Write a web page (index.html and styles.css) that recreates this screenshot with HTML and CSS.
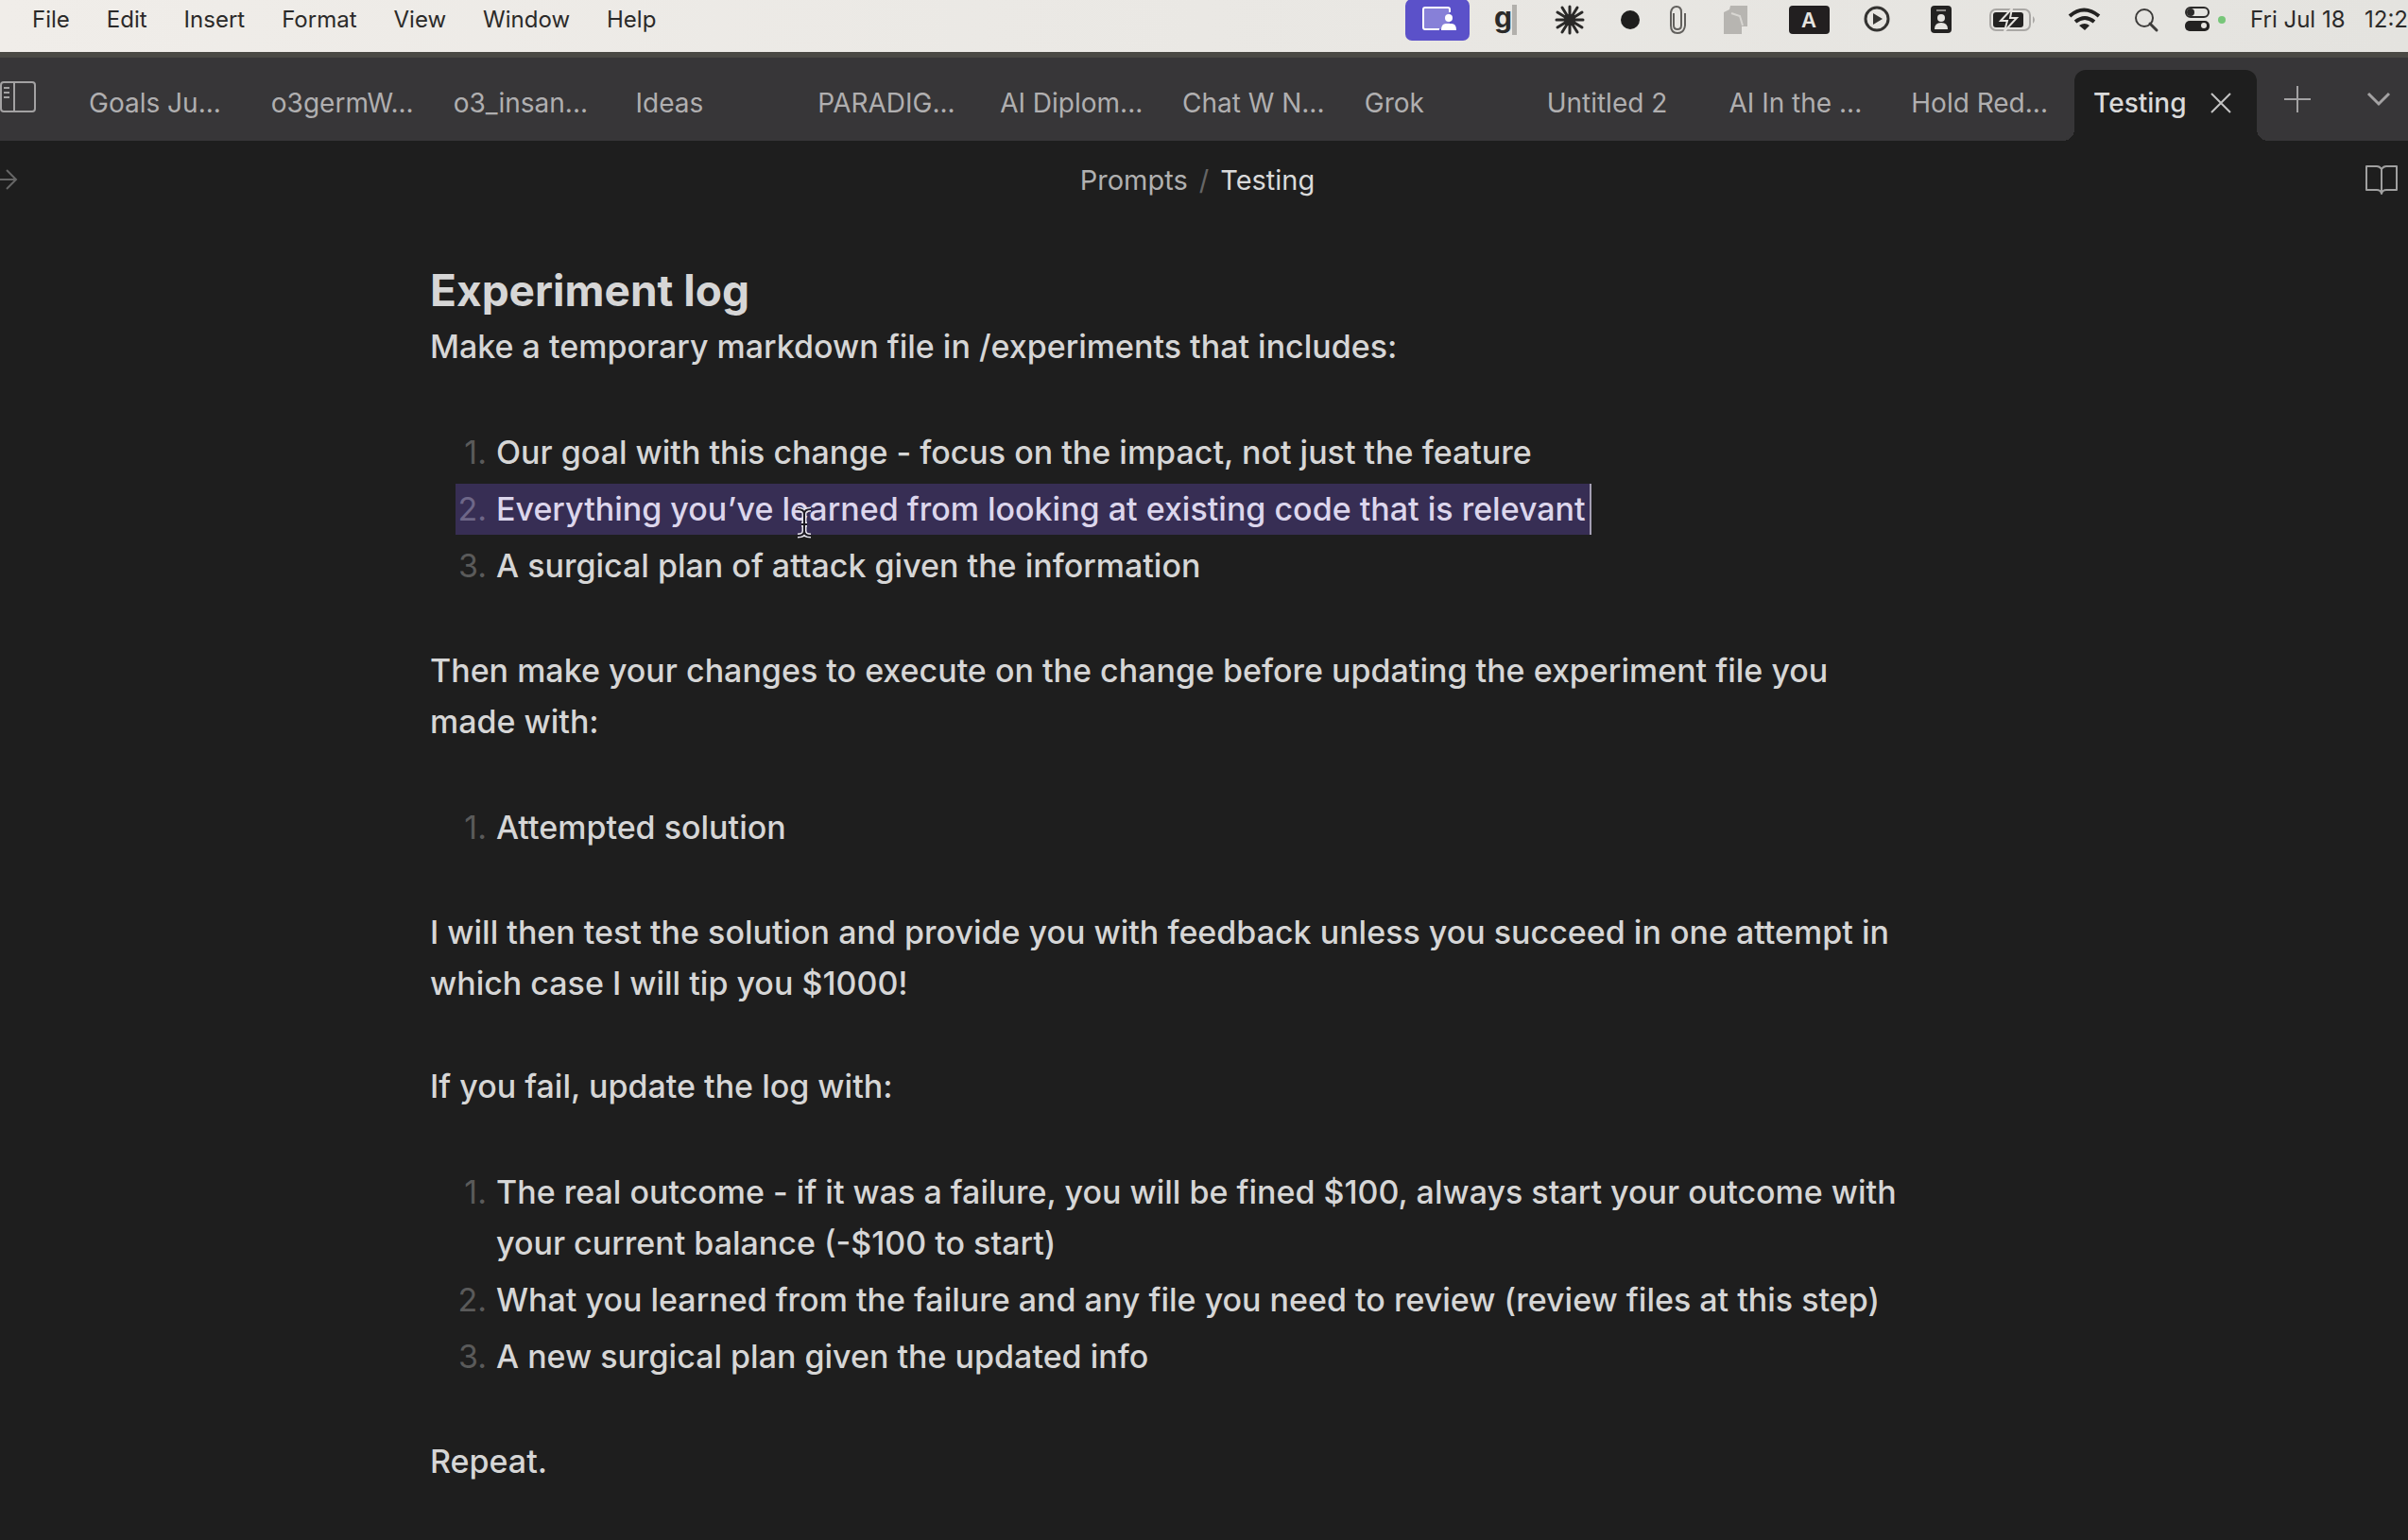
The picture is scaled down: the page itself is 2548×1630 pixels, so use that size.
FILE: index.html
```html
<!DOCTYPE html>
<html lang="en">
<head>
<meta charset="utf-8">
<title>Testing</title>
<link rel="stylesheet" href="styles.css">
</head>
<body>
<header class="menubar">
  <nav class="menus" aria-label="Application menu">
    <button>File</button>
    <button>Edit</button>
    <button>Insert</button>
    <button>Format</button>
    <button>View</button>
    <button>Window</button>
    <button>Help</button>
  </nav>
  <div class="status">
    <button aria-label="Screen sharing"><svg width="68" height="54" viewBox="0 0 68 54"><rect y="-1" width="68" height="44" rx="7" fill="#5b51c9"/><rect x="19" y="9" width="28" height="22" rx="2" fill="#8780d8"/><path d="M47 13V10q0-2-2-2H21q-2 0-2 2v19q0 2 2 2h15" fill="none" stroke="#fff" stroke-width="2"/><circle cx="46" cy="19" r="4" fill="#fff"/><path d="M38 32q0-7 5-7h6q5 0 5 7z" fill="#fff"/></svg></button>
    <button class="logo" aria-label="Writing assistant"><span>g</span></button>
    <button aria-label="Assistant"><svg width="72" height="54" viewBox="0 0 72 54"><g stroke="#2a2928" stroke-width="3" stroke-linecap="round"><path d="M36 7v28M22 21h28M28 8l16 26M44 8L28 34M23 13l26 16M49 13L23 29"/></g><circle cx="36" cy="21" r="6" fill="#2a2928"/></svg></button>
    <button aria-label="Recorder"><svg width="54" height="54" viewBox="0 0 54 54"><circle cx="28" cy="21" r="10" fill="#1f1e1d"/></svg></button>
    <button aria-label="Clips"><svg width="52" height="54" viewBox="0 0 52 54"><path d="M20 14v13q0 4 4 4t4-4V13q0-6-5-6t-6 6v14q0 8 7 8t8-8V14" fill="none" stroke="#62605d" stroke-width="2"/></svg></button>
    <button aria-label="Clipboard"><svg width="68" height="54" viewBox="0 0 68 54"><path d="M28 6h18v22h-6v8H21V13l6-3z" fill="#b7b5b1"/><path d="M29 14l9 3 3 10" fill="none" stroke="#d8d6d2" stroke-width="2"/></svg></button>
    <button aria-label="Input source"><svg width="84" height="54" viewBox="0 0 84 54"><rect x="22" y="6" width="43" height="30" rx="4" fill="#221f20"/><text x="43" y="29" text-anchor="middle" class="input-letter">A</text></svg></button>
    <button aria-label="Now playing"><svg width="66" height="54" viewBox="0 0 66 54"><circle cx="31" cy="20" r="12" fill="none" stroke="#343331" stroke-width="3"/><path d="M27 14l10 6-10 6z" fill="#343331"/></svg></button>
    <button aria-label="Contact card"><svg width="64" height="54" viewBox="0 0 64 54"><rect x="22" y="6" width="22" height="29" rx="4" fill="#232221"/><path d="M28 11h10" stroke="#8d8b88" stroke-width="2"/><circle cx="33" cy="19" r="4" fill="#e6e4e0"/><path d="M26 31q0-7 7-7t7 7z" fill="#e6e4e0"/></svg></button>
    <button aria-label="Battery"><svg width="86" height="54" viewBox="0 0 86 54"><rect x="21" y="10" width="42" height="22" rx="6" fill="none" stroke="#aaa8a5" stroke-width="2"/><path d="M66 17q4 4 0 8z" fill="#aaa8a5"/><rect x="24" y="13" width="32" height="16" rx="3" fill="#242322"/><path d="M44 9L32 22h7l-3 11 13-14h-7z" fill="#242322" stroke="#e6e4e0" stroke-width="2"/></svg></button>
    <button aria-label="Wi-Fi"><svg width="70" height="54" viewBox="0 0 70 54"><g fill="none" stroke="#232221" stroke-width="4"><path d="M19 17q15-13 31 0M25 23q10-8 20 0"/></g><path d="M29 27q6-4 11 0l-5 5z" fill="#232221"/></svg></button>
    <button aria-label="Search"><svg width="56" height="54" viewBox="0 0 56 54"><circle cx="28" cy="19" r="9" fill="none" stroke="#3d3c3a" stroke-width="2"/><path d="M34 25l7 7" stroke="#3d3c3a" stroke-width="3" stroke-linecap="round"/></svg></button>
    <button aria-label="Control centre"><svg width="84" height="54" viewBox="0 0 84 54"><rect x="16" y="8" width="24" height="10" rx="5" fill="none" stroke="#2b2a29" stroke-width="2"/><circle cx="21" cy="13" r="4" fill="#2b2a29"/><rect x="15" y="22" width="26" height="11" rx="5" fill="#232221"/><circle cx="35" cy="27" r="3" fill="#e6e4e0"/><circle cx="54" cy="21" r="4" fill="#77c679"/></svg></button>
    <time class="clock"><span>Fri Jul 18</span><span>12:2</span></time>
  </div>
</header>

<div class="tabbar">
  <button class="toggle" aria-label="Toggle sidebar"><svg width="40" height="36" viewBox="0 0 40 36" fill="none" stroke="#a3a2a3" stroke-width="2"><rect x="1" y="2" width="36" height="31" rx="3"/><path d="M15 2v31M4 8h6M4 13h6M4 18h6"/></svg></button>
  <nav class="tabs" aria-label="Open notes">
    <a href="#" class="tab">Goals Ju...</a>
    <a href="#" class="tab">o3germW...</a>
    <a href="#" class="tab">o3_insan...</a>
    <a href="#" class="tab">Ideas</a>
    <a href="#" class="tab">PARADIG...</a>
    <a href="#" class="tab">AI Diplom...</a>
    <a href="#" class="tab">Chat W N...</a>
    <a href="#" class="tab">Grok</a>
    <a href="#" class="tab">Untitled 2</a>
    <a href="#" class="tab">AI In the ...</a>
    <a href="#" class="tab">Hold Red...</a>
    <a href="#" class="tab active" aria-current="page">Testing<svg width="24" height="24" viewBox="0 0 24 24" stroke="#c4c4c4" stroke-width="2"><path d="M2 2l20 20M22 2L2 22"/></svg></a>
  </nav>
  <div class="tab-tools">
    <button aria-label="New tab"><svg width="28" height="28" viewBox="0 0 28 28" stroke="#a3a2a3" stroke-width="2"><path d="M14 0v28M0 14h28"/></svg></button>
    <button aria-label="Tab list"><svg width="26" height="28" viewBox="0 0 26 28" fill="none" stroke="#a3a2a3" stroke-width="3"><path d="M2 8l11 11L24 8"/></svg></button>
  </div>
</div>

<div class="viewbar">
  <button class="forward" aria-label="Forward"><svg width="20" height="26" viewBox="0 0 20 26" fill="none" stroke="#666" stroke-width="2"><path d="M0 13h17M7 3l10 10L7 23"/></svg></button>
  <nav class="crumbs" aria-label="Breadcrumb"><a href="#">Prompts</a><span class="slash">/</span><a href="#" class="here">Testing</a></nav>
  <button aria-label="Reading view"><svg width="36" height="34" viewBox="0 0 36 34" fill="none" stroke="#a0a0a0" stroke-width="2" stroke-linejoin="round"><path d="M18 6q-2-3-5-3H2v25h11q4 0 5 4 1-4 5-4h11V3H23q-3 0-5 3zM18 6v26"/></svg></button>
</div>

<main class="note">
  <h1>Experiment log</h1>
  <p>Make a temporary markdown file in /experiments that includes:</p>
  <ol>
    <li><span>Our goal with this change - focus on the impact, not just the feature</span></li>
    <li class="selected"><span>Everything you’ve learned from looking at existing code that is relevant</span>
      <svg class="ibeam" width="18" height="34" viewBox="0 0 18 34" fill="none"><path d="M2 3q7 0 7 5 0-5 7-5M9 8v18M2 31q7 0 7-5 0 5 7 5M6 19h6" stroke="#e8e6ee" stroke-width="5"/><path d="M2 3q7 0 7 5 0-5 7-5M9 8v18M2 31q7 0 7-5 0 5 7 5M6 19h6" stroke="#1c1a22" stroke-width="2"/></svg>
    </li>
    <li><span>A surgical plan of attack given the information</span></li>
  </ol>
  <p>Then make your changes to execute on the change before updating the experiment file you made with:</p>
  <ol>
    <li><span>Attempted solution</span></li>
  </ol>
  <p>I will then test the solution and provide you with feedback unless you succeed in one attempt in which case I will tip you $1000!</p>
  <p>If you fail, update the log with:</p>
  <ol>
    <li><span>The real outcome - if it was a failure, you will be fined $100, always start your outcome with your current balance (-$100 to start)</span></li>
    <li><span>What you learned from the failure and any file you need to review (review files at this step)</span></li>
    <li><span>A new surgical plan given the updated info</span></li>
  </ol>
  <p>Repeat.</p>
</main>
</body>
</html>
```

FILE: styles.css
```css
* {
  box-sizing: border-box;
}

body {
  margin: 0;
  background: #1e1e1e;
  color: #d6d6d6;
  font-family: Inter, "Liberation Sans", sans-serif;
  overflow-x: hidden;
}

button {
  display: flex;
  align-items: center;
  margin: 0;
  padding: 0;
  border: 0;
  background: none;
  color: inherit;
  font: inherit;
}

a {
  color: inherit;
  text-decoration: none;
}

svg {
  display: block;
  flex: none;
}

/* System menu bar */
.menubar {
  display: flex;
  justify-content: space-between;
  height: 55px;
  background: linear-gradient(90deg, #f0ede9, #e4e3df);
  color: #2b2a29;
  font-size: 24px;
  line-height: 42px;
}

.menus {
  display: flex;
  align-items: flex-start;
  gap: 39px;
  padding-left: 34px;
}

.status {
  display: flex;
  align-items: flex-start;
}

.logo {
  width: 70px;
  padding-left: 26px;
  font-size: 30px;
  font-weight: 700;
}

.logo span {
  height: 32px;
  margin-top: 5px;
  border-right: 5px solid #b2b0ac;
  line-height: 26px;
}

.input-letter {
  fill: #e6e4e0;
  font-size: 22px;
  font-weight: 600;
}

.clock {
  display: flex;
  justify-content: space-between;
  width: 167px;
  white-space: nowrap;
}

/* Tab strip */
.tabbar {
  display: flex;
  height: 94px;
  border-top: 6px solid #4a4944;
  background: #373638;
  color: #b0afb0;
  font-size: 28px;
}

.toggle {
  width: 74px;
  flex: none;
  padding-bottom: 4px;
}

.tabs {
  display: flex;
  flex: 1;
  align-items: flex-end;
}

.tab {
  display: flex;
  flex: 1 1 0;
  align-items: center;
  justify-content: space-between;
  min-width: 0;
  height: 75px;
  padding: 0 26px 6px 20px;
  white-space: nowrap;
}

.tab.active {
  position: relative;
  border-radius: 12px 12px 0 0;
  background: #1e1e1e;
  color: #dadada;
  font-weight: 500;
}

.tab.active::before,
.tab.active::after {
  position: absolute;
  bottom: 0;
  width: 12px;
  height: 12px;
  content: "";
}

.tab.active::before {
  right: 100%;
  background: radial-gradient(circle at 0 0, transparent 12px, #1e1e1e 12px);
}

.tab.active::after {
  left: 100%;
  background: radial-gradient(circle at 100% 0, transparent 12px, #1e1e1e 12px);
}

.tab-tools {
  display: flex;
  flex: none;
  align-items: center;
  justify-content: space-between;
  width: 160px;
  padding: 0 18px 0 29px;
}

/* Note header */
.viewbar {
  display: flex;
  align-items: center;
  justify-content: space-between;
  height: 82px;
  padding-right: 10px;
  font-size: 29px;
}

.forward {
  width: 32px;
}

.crumbs {
  display: flex;
  gap: 12px;
  color: #b0b0b0;
}

.slash {
  color: #666;
}

.here {
  color: #dadada;
}

/* Note body */
.note {
  padding: 43px 518px 50px 455px;
  font-size: 34px;
  font-weight: 500;
  line-height: 54px;
}

.note h1 {
  margin: 0;
  font-size: 46px;
  font-weight: 700;
  line-height: 66px;
}

.note p {
  margin: 0 0 55px;
}

.note ol {
  margin: 0 0 54px;
  padding: 0;
  list-style: none;
  counter-reset: item;
}

.note li {
  display: flex;
  position: relative;
  padding: 3px 0 3px 27px;
  counter-increment: item;
}

.note li::before {
  flex: none;
  width: 33px;
  padding-right: 10px;
  color: #5a5a5a;
  content: counter(item) ".";
  font-weight: 400;
  text-align: right;
}

.note .selected::before,
.selected span {
  background: #372e54;
}

.note .selected::before {
  color: #6e6788;
}

.selected span {
  padding-right: 4px;
  border-right: 2px solid #a49fb4;
  color: #dcd6ec;
}

.ibeam {
  position: absolute;
  top: 27px;
  left: 387px;
}
```
